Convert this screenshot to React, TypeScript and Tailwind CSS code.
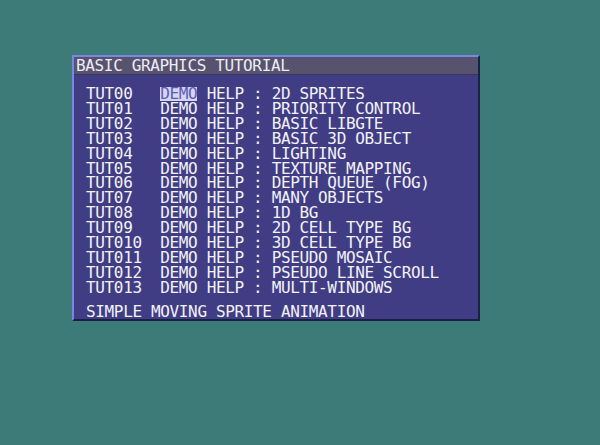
import React from "react";

const rows: [string, string][] = [
  ["TUT00", "2D SPRITES"],
  ["TUT01", "PRIORITY CONTROL"],
  ["TUT02", "BASIC LIBGTE"],
  ["TUT03", "BASIC 3D OBJECT"],
  ["TUT04", "LIGHTING"],
  ["TUT05", "TEXTURE MAPPING"],
  ["TUT06", "DEPTH QUEUE (FOG)"],
  ["TUT07", "MANY OBJECTS"],
  ["TUT08", "1D BG"],
  ["TUT09", "2D CELL TYPE BG"],
  ["TUT010", "3D CELL TYPE BG"],
  ["TUT011", "PSEUDO MOSAIC"],
  ["TUT012", "PSEUDO LINE SCROLL"],
  ["TUT013", "MULTI-WINDOWS"],
];

export default function App() {
  return (
    <div
      className="w-[600px] h-[445px] bg-[#3c7b78] pt-[55px] pl-[72px] overflow-hidden"
      style={{ fontFamily: '"DejaVu Sans Mono", "Liberation Mono", monospace' }}
    >
      <div className="w-[408px] h-[266px] border-t-2 border-l-2 border-r-2 border-b-2 border-t-[#7b86e4] border-l-[#7b86e4] border-r-[#1b2145] border-b-[#1b2145] bg-[#413d84] flex flex-col">
        <div className="h-[18px] bg-[#57536f] pl-[2px] text-[16px] leading-[18px] tracking-[-0.35px] text-[#ececf4] whitespace-pre border-b border-[#3a3660]">
          BASIC GRAPHICS TUTORIAL
        </div>
        <div className="pl-[12px] pt-[12px] text-[16px] leading-[14.92px] tracking-[-0.35px] text-[#f2f2fa]">
          {rows.map(([name, desc], i) => (
            <div key={name} className="whitespace-pre h-[14.92px]">
              {name.padEnd(8, " ")}
              {i === 0 ? (
                <span className="inline-block align-top h-[14px] leading-[14.92px] bg-[#d6d6f0] text-[#5b5bbb]">DEMO</span>
              ) : (
                "DEMO"
              )}
              {" HELP : " + desc}
            </div>
          ))}
          <div className="whitespace-pre h-[14.92px] mt-[9px]">SIMPLE MOVING SPRITE ANIMATION</div>
        </div>
      </div>
    </div>
  );
}
